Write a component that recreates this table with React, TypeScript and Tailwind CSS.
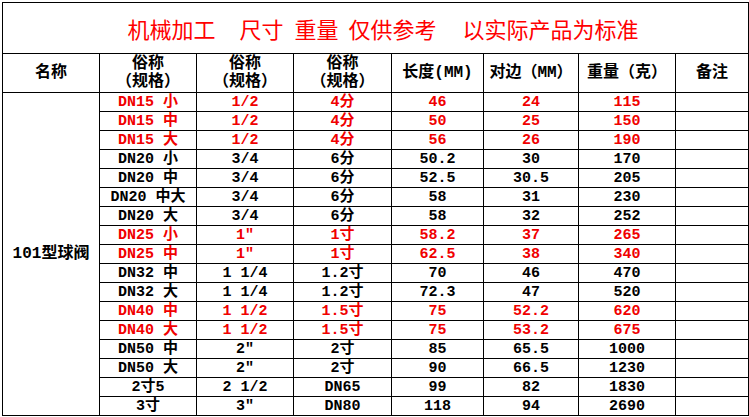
import React from 'react';

type Row = {
  name: string;
  spec1: string;
  spec2: string;
  length: string;
  side: string;
  weight: string;
  red?: boolean;
};

const rows: Row[] = [
  { name: 'DN15 小', spec1: '1/2', spec2: '4分', length: '46', side: '24', weight: '115', red: true },
  { name: 'DN15 中', spec1: '1/2', spec2: '4分', length: '50', side: '25', weight: '150', red: true },
  { name: 'DN15 大', spec1: '1/2', spec2: '4分', length: '56', side: '26', weight: '190', red: true },
  { name: 'DN20 小', spec1: '3/4', spec2: '6分', length: '50.2', side: '30', weight: '170' },
  { name: 'DN20 中', spec1: '3/4', spec2: '6分', length: '52.5', side: '30.5', weight: '205' },
  { name: 'DN20 中大', spec1: '3/4', spec2: '6分', length: '58', side: '31', weight: '230' },
  { name: 'DN20 大', spec1: '3/4', spec2: '6分', length: '58', side: '32', weight: '252' },
  { name: 'DN25 小', spec1: '1″', spec2: '1寸', length: '58.2', side: '37', weight: '265', red: true },
  { name: 'DN25 中', spec1: '1″', spec2: '1寸', length: '62.5', side: '38', weight: '340', red: true },
  { name: 'DN32 中', spec1: '1 1/4', spec2: '1.2寸', length: '70', side: '46', weight: '470' },
  { name: 'DN32 大', spec1: '1 1/4', spec2: '1.2寸', length: '72.3', side: '47', weight: '520' },
  { name: 'DN40 中', spec1: '1 1/2', spec2: '1.5寸', length: '75', side: '52.2', weight: '620', red: true },
  { name: 'DN40 大', spec1: '1 1/2', spec2: '1.5寸', length: '75', side: '53.2', weight: '675', red: true },
  { name: 'DN50 中', spec1: '2″', spec2: '2寸', length: '85', side: '65.5', weight: '1000' },
  { name: 'DN50 大', spec1: '2″', spec2: '2寸', length: '90', side: '66.5', weight: '1230' },
  { name: '2寸5', spec1: '2 1/2', spec2: 'DN65', length: '99', side: '82', weight: '1830' },
  { name: '3寸', spec1: '3″', spec2: 'DN80', length: '118', side: '94', weight: '2690' },
];

const cell = 'border border-black p-0 text-center align-middle whitespace-pre';

export default function App() {
  return (
    <div className="w-[749px] h-[417px] bg-white pt-[2px] pl-[2px] overflow-hidden font-['Liberation_Mono','Noto_Sans_CJK_SC',monospace] font-bold text-black">
      <table className="table-fixed border-collapse w-[746px]">
        <colgroup>
          <col className="w-[97px]" />
          <col className="w-[97px]" />
          <col className="w-[97px]" />
          <col className="w-[98px]" />
          <col className="w-[92px]" />
          <col className="w-[95px]" />
          <col className="w-[97px]" />
          <col className="w-[73px]" />
        </colgroup>
        <tbody>
          {/* title */}
          <tr className="h-[51px]">
            <td colSpan={8} className={cell}>
              <div className="flex justify-center pl-[15px] font-['Noto_Sans_CJK_SC',sans-serif] font-normal text-[22px] leading-none text-[#ff0000]">
                <span>机械加工</span>
                <span className="ml-[24px]">尺寸</span>
                <span className="ml-[11px]">重量</span>
                <span className="ml-[10px]">仅供参考</span>
                <span className="ml-[26px]">以实际产品为标准</span>
              </div>
            </td>
          </tr>

          {/* header */}
          <tr className="h-[39px] text-[16px] leading-[18px]">
            <td className={cell}>名称</td>
            <td className={cell}>俗称<br />（规格）</td>
            <td className={cell}>俗称<br />（规格）</td>
            <td className={cell}>俗称<br />（规格）</td>
            <td className={cell}>长度(MM)</td>
            <td className={cell}>对边（MM）</td>
            <td className={cell}>重量（克）</td>
            <td className={cell}>备注</td>
          </tr>

          {rows.map((r, i) => (
            <tr key={i} className={`h-[19px] text-[15px] leading-[17px] ${r.red ? 'text-[#f00000]' : 'text-black'}`}>
              {i === 0 && (
                <td rowSpan={rows.length} className={`${cell} text-[16px] text-black`}>
                  101型球阀
                </td>
              )}
              <td className={cell}>{r.name}</td>
              <td className={cell}>{r.spec1}</td>
              <td className={cell}>{r.spec2}</td>
              <td className={cell}>{r.length}</td>
              <td className={cell}>{r.side}</td>
              <td className={cell}>{r.weight}</td>
              <td className={cell}></td>
            </tr>
          ))}
        </tbody>
      </table>
    </div>
  );
}
